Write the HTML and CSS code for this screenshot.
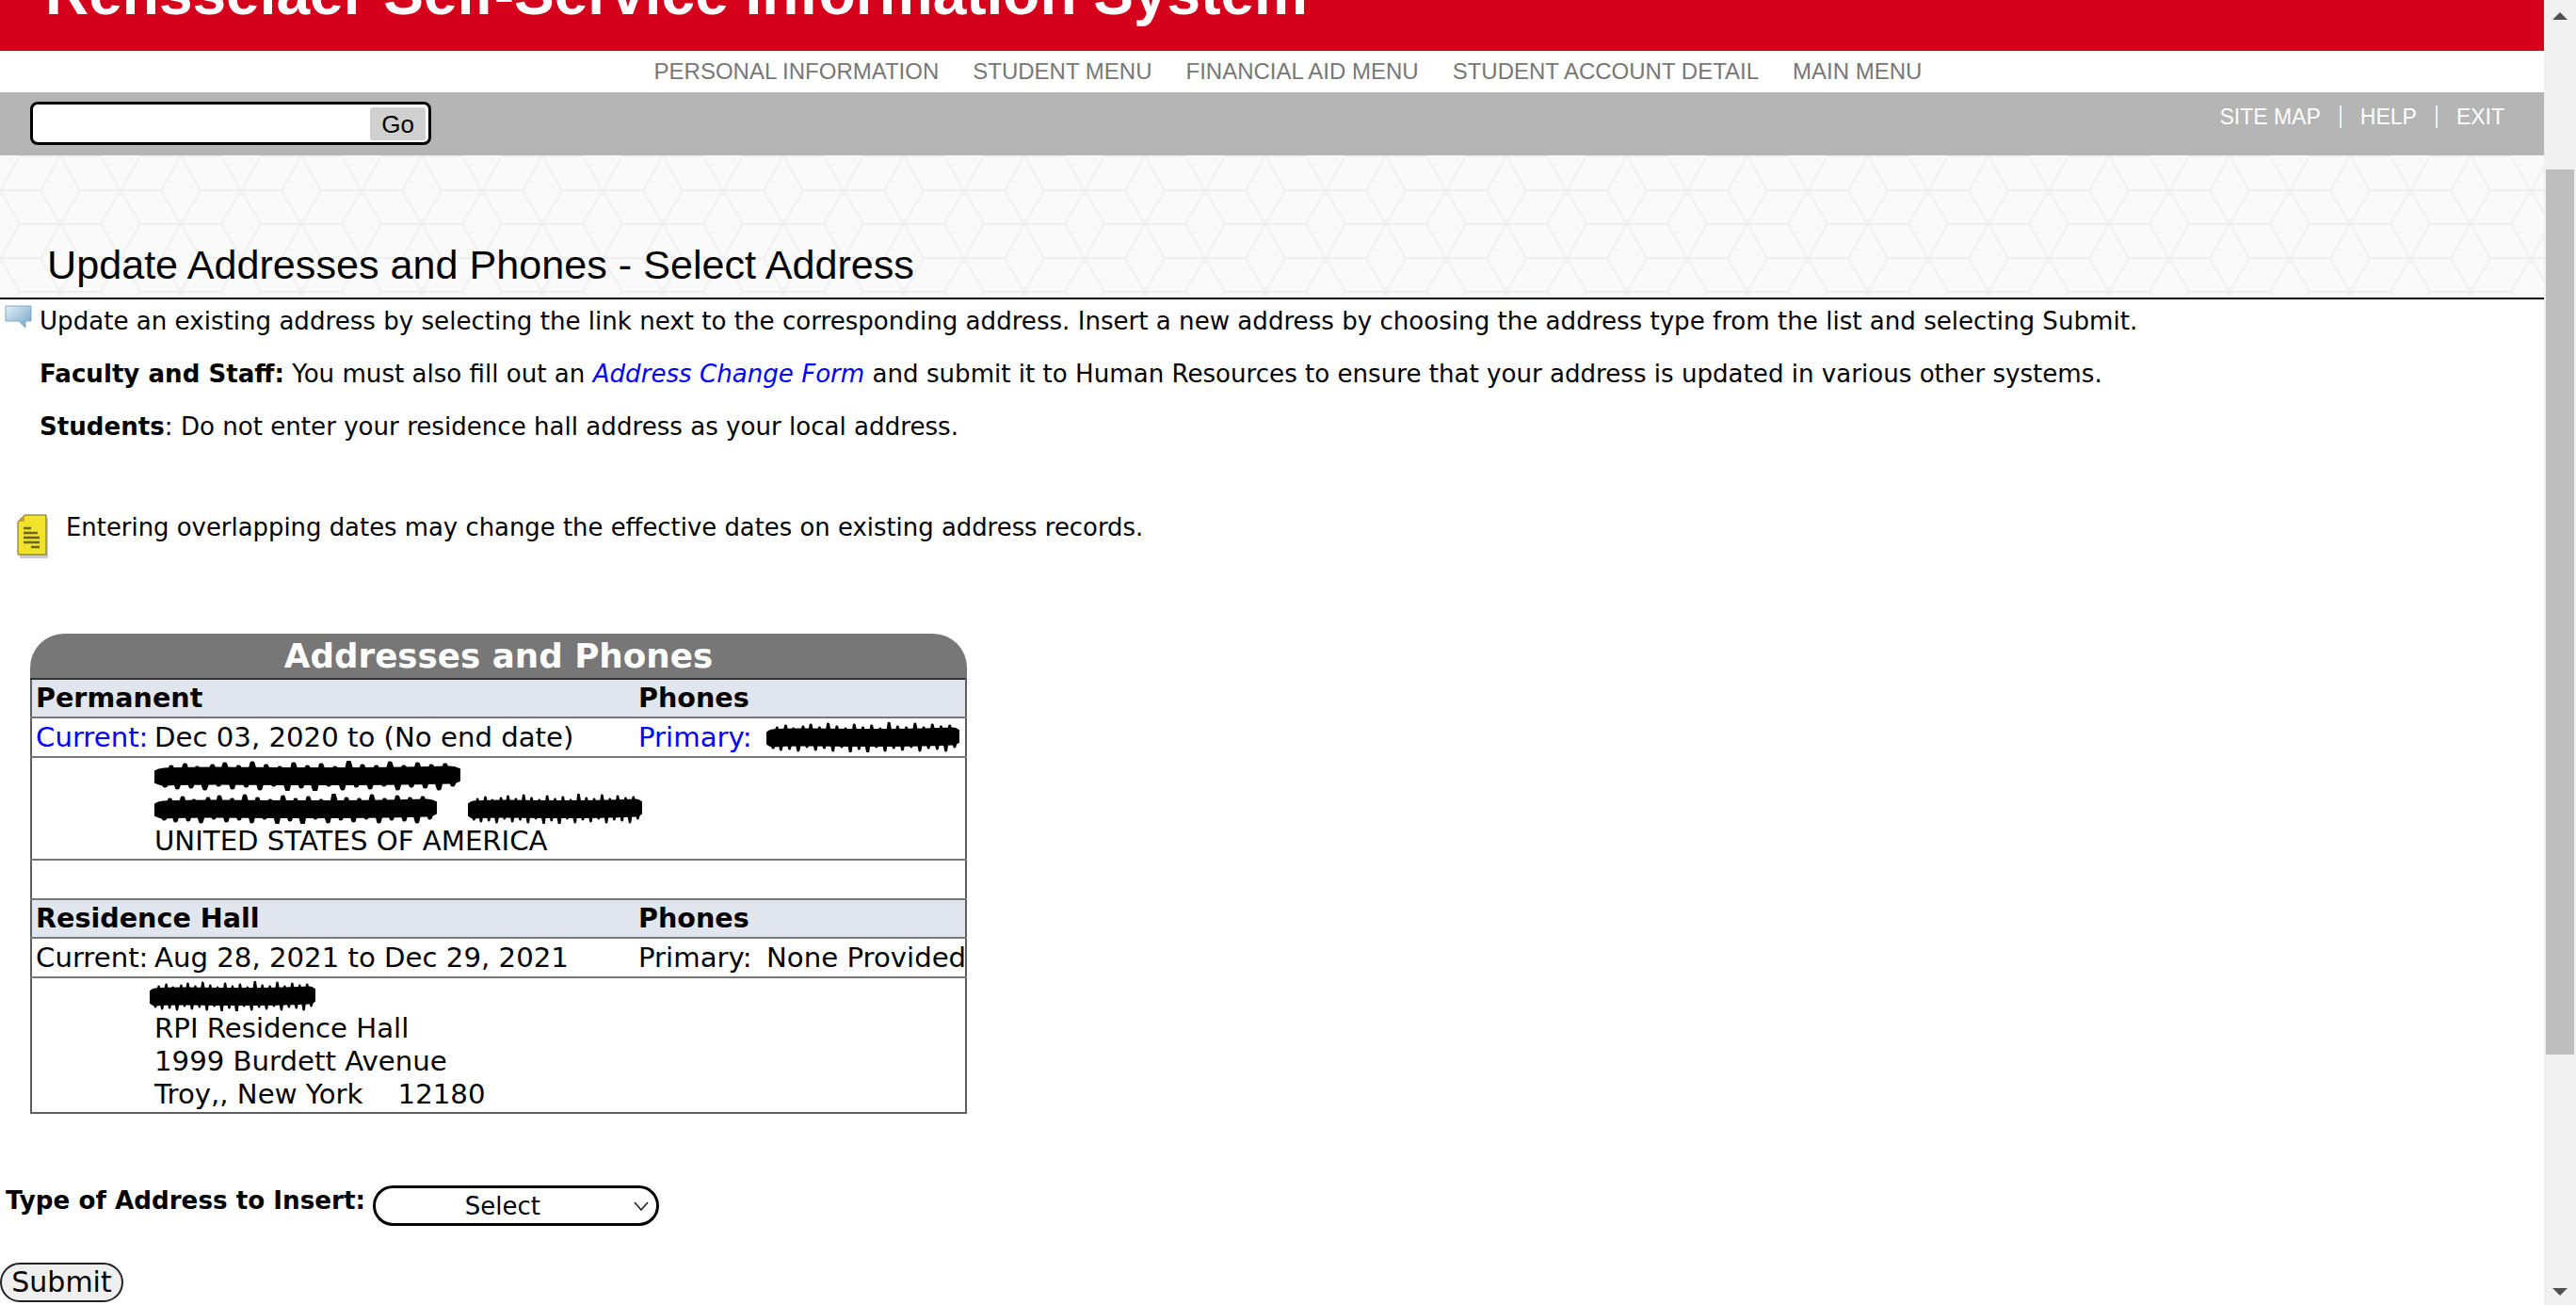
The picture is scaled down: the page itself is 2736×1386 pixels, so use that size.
FILE: index.html
```html
<!DOCTYPE html>
<html lang="en">
<head>
<meta charset="utf-8">
<title>Update Addresses and Phones - Select Address</title>
<link rel="stylesheet" href="styles.css">
</head>
<body>
<svg class="defs" width="0" height="0" aria-hidden="true">
  <symbol id="scribble" viewBox="0 0 200 32" preserveAspectRatio="none">
    <path d="M7 17C40 14 90 19 193 15" fill="none" stroke="#000" stroke-width="19" stroke-linecap="round"/>
    <path d="M1 15L7 27L11 6L15 29L20 4L24 28L28 7L33 30L38 5L42 26L46 3L51 29L55 6L60 27L64 2L69 30L73 5L78 26L82 7L87 31L91 3L96 28L100 6L105 32L109 4L114 26L118 7L123 30L127 1L132 27L136 5L141 29L145 6L150 26L154 2L159 30L163 6L168 27L172 3L177 28L181 5L186 30L190 4L195 26L199 10" fill="none" stroke="#000" stroke-width="3" stroke-linejoin="round"/>
  </symbol>
</svg>
<div class="window">
  <div class="page">
    <header class="banner"><div class="site-name">Rensselaer Self-Service Information System</div></header>
    <nav class="menu">
      <a>PERSONAL INFORMATION</a>
      <a>STUDENT MENU</a>
      <a>FINANCIAL AID MENU</a>
      <a>STUDENT ACCOUNT DETAIL</a>
      <a>MAIN MENU</a>
    </nav>
    <div class="toolbar">
      <div class="search">
        <input class="search-input" type="text" aria-label="Search">
        <button class="go" type="button">Go</button>
      </div>
      <div class="links">
        <a>SITE MAP</a><span class="sep"></span><a>HELP</a><span class="sep"></span><a>EXIT</a>
      </div>
    </div>
    <div class="title-band">
      <svg class="hex" width="100%" height="100%" aria-hidden="true">
        <defs>
          <pattern id="hexes" width="128" height="72" patternUnits="userSpaceOnUse" patternTransform="translate(0 37)">
            <path d="M0 0H43L64 -36L85 0H128M43 0L64 36L85 0M0 0L21 36L0 72L-21 36ZM128 0L149 36L128 72L107 36ZM21 36H107M0 72H43L64 36L85 72H128" fill="none" stroke="#efefef" stroke-width="2"/>
          </pattern>
        </defs>
        <rect width="100%" height="100%" fill="url(#hexes)"/>
      </svg>
      <h1 class="page-title">Update Addresses and Phones - Select Address</h1>
    </div>
    <main class="content">
      <section class="info">
        <svg class="bubble" viewBox="0 0 29 25" width="29" height="25" aria-hidden="true">
          <defs>
            <linearGradient id="bub" x1="0" y1="0" x2="1" y2="1">
              <stop offset="0" stop-color="#e4eff7"/><stop offset="1" stop-color="#6fa3c7"/>
            </linearGradient>
          </defs>
          <path d="M1 1H28V17H22V24L15 17H1Z" fill="url(#bub)" stroke="#7fa9c6"/>
        </svg>
        <div class="info-text">
          <p>Update an existing address by selecting the link next to the corresponding address. Insert a new address by choosing the address type from the list and selecting Submit.</p>
          <p><b>Faculty and Staff:</b> You must also fill out an <a class="form-link">Address Change Form</a> and submit it to Human Resources to ensure that your address is updated in various other systems.</p>
          <p><b>Students</b>: Do not enter your residence hall address as your local address.</p>
        </div>
      </section>
      <section class="note">
        <svg class="note-icon" viewBox="0 0 34 48" width="34" height="48" aria-hidden="true">
          <path d="M3 47H33V4H3Z" fill="#aaa" opacity=".6"/>
          <path d="M8 1H31V43H1V8Z" fill="#f2e32a" stroke="#6b6420"/>
          <path d="M1 8L8 1V8Z" fill="#c9a52a"/>
          <path d="M7 15H15M7 20H22M7 25H24M7 30H24M15 35H24" stroke="#6b6420" stroke-width="2.5" fill="none"/>
        </svg>
        <p>Entering overlapping dates may change the effective dates on existing address records.</p>
      </section>
      <section class="records">
        <div class="records-title">Addresses and Phones</div>
        <table class="records-table">
          <colgroup><col class="c-label"><col class="c-body"><col class="c-phone"><col></colgroup>
          <tr class="head"><th colspan="2">Permanent</th><th colspan="2">Phones</th></tr>
          <tr class="row">
            <td><a class="blue">Current:</a></td><td>Dec 03, 2020 to (No end date)</td>
            <td><a class="blue">Primary:</a></td>
            <td><svg class="scr scr-phone"><use href="#scribble"/></svg></td>
          </tr>
          <tr class="addr">
            <td></td>
            <td colspan="3">
              <div class="ln"><svg class="scr scr-a"><use href="#scribble"/></svg></div>
              <div class="ln"><svg class="scr scr-b"><use href="#scribble"/></svg><svg class="scr scr-c"><use href="#scribble"/></svg></div>
              <div class="ln">UNITED STATES OF AMERICA</div>
            </td>
          </tr>
          <tr class="row"><td colspan="4"></td></tr>
          <tr class="head"><th colspan="2">Residence Hall</th><th colspan="2">Phones</th></tr>
          <tr class="row">
            <td>Current:</td><td>Aug 28, 2021 to Dec 29, 2021</td>
            <td>Primary:</td><td>None Provided</td>
          </tr>
          <tr class="addr">
            <td></td>
            <td colspan="3">
              <div class="ln"><svg class="scr scr-d"><use href="#scribble"/></svg></div>
              <div class="ln">RPI Residence Hall</div>
              <div class="ln">1999 Burdett Avenue</div>
              <div class="ln">Troy,, New York &nbsp;&nbsp; 12180</div>
            </td>
          </tr>
        </table>
      </section>
      <form class="insert">
        <label class="insert-label" for="atype">Type of Address to Insert:</label>
        <span class="select-wrap">
          <select class="insert-select" id="atype"><option>Select</option></select>
          <svg class="chevron" viewBox="0 0 16 10" width="16" height="10" aria-hidden="true"><path d="M1 1L8 9L15 1" fill="none" stroke="#222" stroke-width="1.6"/></svg>
        </span>
      </form>
      <button class="submit" type="button">Submit</button>
    </main>
  </div>
  <aside class="scrollbar" aria-hidden="true">
    <span class="arrow up"></span>
    <div class="track"><div class="thumb"></div></div>
    <span class="arrow down"></span>
  </aside>
</div>
</body>
</html>
```
FILE: styles.css
```css
* { box-sizing: border-box; }
html, body { margin: 0; height: 100%; overflow: hidden; background: #fff; }
body { font-family: "DejaVu Sans", Verdana, sans-serif; color: #000; }
.defs { position: absolute; }
.window { display: flex; height: 1386px; }
.page { flex: 0 0 2702px; width: 2702px; overflow: hidden; }

.banner { height: 54px; background: #d5001c; overflow: hidden; display: flex; align-items: flex-end; padding: 0 0 25px 48px; }
.site-name { font: bold 64px/72px "Liberation Sans", Arial, sans-serif; color: #fff; white-space: nowrap; flex: none; }

.menu { height: 44px; display: flex; justify-content: center; align-items: center; gap: 36px; padding-left: 34px; font: 24px/28px "Liberation Sans", Arial, sans-serif; color: #777; }

.toolbar { height: 67px; background: #b5b5b5; display: flex; justify-content: space-between; padding: 10px 42px 0 32px; }
.search { width: 426px; height: 46px; background: #fff; border: 3px solid #000; border-radius: 8px; display: flex; align-items: center; justify-content: space-between; padding: 0 3px 0 0; }
.search-input { flex: 1; min-width: 0; border: 0; background: transparent; outline: 0; height: 34px; }
.go { width: 59px; height: 35px; margin: 0; padding: 2px 0 0; border: 0; border-radius: 3px; background: #d0d0d0; font: 26px/33px "Liberation Sans", Arial, sans-serif; color: #000; }
.links { display: flex; align-items: center; height: 28px; margin-top: 2px; font: 23px/28px "Liberation Sans", Arial, sans-serif; color: #fff; }
.sep { width: 2px; height: 24px; background: #e4f2f8; margin: 0 20px; }

.title-band { position: relative; height: 153px; background: #fafafa; border-bottom: 2px solid #000; display: flex; align-items: flex-end; padding: 0 0 10px 50px; }
.hex { position: absolute; inset: 0; }
.page-title { position: relative; margin: 0; font: normal 43.15px/50px "Liberation Sans", Arial, sans-serif; }

.content { padding: 0; }
.info { display: flex; gap: 8px; padding: 6px 0 0 5px; font-size: 26.1px; line-height: 32px; }
.bubble { flex: none; }
.info-text p { margin: 0 0 24px; }
.info-text p:first-child { margin-top: 1px; }
.form-link { color: #0000ff; font-style: italic; }
.note { display: flex; gap: 18px; padding: 53px 0 0 18px; font-size: 25.9px; line-height: 32px; }
.note-icon { flex: none; }
.note p { margin: -2px 0 0; }

.records { width: 995px; margin: 79px 0 0 32px; font-size: 29.2px; line-height: 35px; }
.records-title { height: 47px; background: #777; border-radius: 36px 36px 0 0; color: #fff; font-weight: bold; font-size: 35.7px; line-height: 47px; text-align: center; }
.records-table { width: 100%; table-layout: fixed; border-collapse: collapse; border: 2px solid #5f5f5f; border-top-color: #333; }
.c-label { width: 128px; }
.c-body { width: 513px; }
.c-phone { width: 137px; }
.records-table th, .records-table td { padding: 0 0 0 4px; text-align: left; vertical-align: middle; white-space: nowrap; }
.records-table th { font-size: 28.6px; }
.records-table td { border: 0; }
.records-table td + td { padding-left: 3px; }
.records-table td:nth-child(3) { padding-left: 4px; }
.records-table tr { border-bottom: 2px solid #777; }
.records-table tr:last-child { border-bottom: 0; }
.head { height: 41px; background: #e1e5ee; }
.head th { font-weight: bold; }
.row { height: 42px; }
.addr td { padding-top: 1px; padding-bottom: 1px; vertical-align: top; }
.blue { color: #0000ff; }
.ln { height: 35px; line-height: 35px; display: flex; align-items: center; }
.scr { display: block; flex: none; }
.scr-phone { width: 205px; height: 32px; }
.scr-a { width: 325px; height: 32px; }
.scr-b { width: 300px; height: 32px; }
.scr-c { width: 185px; height: 32px; margin-left: 33px; }
.scr-d { width: 176px; height: 32px; margin-left: -5px; }

.insert { display: flex; align-items: flex-start; gap: 8px; padding: 76px 0 0 6px; }
.insert-label { font-weight: bold; font-size: 26.2px; line-height: 32px; }
.select-wrap { position: relative; display: block; width: 304px; height: 43px; }
.insert-select { appearance: none; display: block; width: 304px; height: 43px; padding: 0 28px 0 0; background: #fff; border: 3px solid #000; border-radius: 22px; font: 26px "DejaVu Sans", Verdana, sans-serif; text-align: center; color: #000; }
.chevron { position: absolute; right: 11px; top: 17px; }
.submit { display: block; width: 131px; height: 42px; margin: 39px 0 0; padding: 0; background: #efefef; border: 2px solid #222; border-radius: 21px; font: 30px/36px "DejaVu Sans", Verdana, sans-serif; color: #000; }

.scrollbar { flex: 0 0 34px; width: 34px; height: 1386px; background: #f0f0f0; display: flex; flex-direction: column; align-items: center; padding: 13px 0 10px; }
.arrow { flex: none; width: 0; height: 0; border-left: 8px solid transparent; border-right: 8px solid transparent; }
.up { border-bottom: 8px solid #505050; }
.down { border-top: 8px solid #505050; }
.track { flex: 1; width: 100%; padding: 159px 2px 0; }
.thumb { height: 940px; background: #bdbdbd; }
```
